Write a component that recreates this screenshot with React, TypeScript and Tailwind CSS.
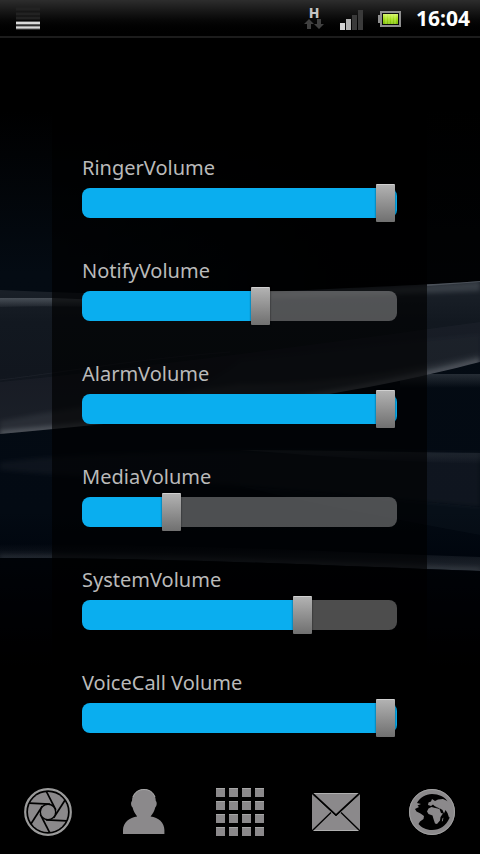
import { useState } from "react";

interface Channel {
  id: string;
  label: string;
  max: number;
  initial: number;
}

const channels: Channel[] = [
  { id: "ringer", label: "RingerVolume", max: 7, initial: 7 },
  { id: "notify", label: "NotifyVolume", max: 7, initial: 4 },
  { id: "alarm", label: "AlarmVolume", max: 7, initial: 7 },
  { id: "media", label: "MediaVolume", max: 15, initial: 4 },
  { id: "system", label: "SystemVolume", max: 7, initial: 5 },
  { id: "voice", label: "VoiceCall Volume", max: 5, initial: 5 },
];

function VolumeSlider({ channel }: { channel: Channel }) {
  const [value, setValue] = useState(channel.initial);

  return (
    <div className="flex flex-col gap-1.5">
      <label htmlFor={channel.id} className="text-[20px] leading-7 text-[#bababa]">
        {channel.label}
      </label>
      <input
        id={channel.id}
        type="range"
        min={0}
        max={channel.max}
        value={value}
        onChange={(e) => setValue(Number(e.target.value))}
        className="block h-[30px] w-full cursor-pointer appearance-none rounded-lg bg-white/30 bg-[linear-gradient(#0aaeef,#0aaeef)] bg-no-repeat px-0.5 outline-none [&::-webkit-slider-thumb]:h-[38px] [&::-webkit-slider-thumb]:w-[19px] [&::-webkit-slider-thumb]:appearance-none [&::-webkit-slider-thumb]:rounded-[1px] [&::-webkit-slider-thumb]:border-t [&::-webkit-slider-thumb]:border-[#d0d0d0] [&::-webkit-slider-thumb]:bg-linear-to-b [&::-webkit-slider-thumb]:from-[#b2b2b2] [&::-webkit-slider-thumb]:to-[#707070] [&::-webkit-slider-thumb]:shadow-[0_0_2px_rgba(0,0,0,0.7)]"
        style={{ backgroundSize: `${(value / channel.max) * 100}% 100%` }}
      />
    </div>
  );
}

function Wallpaper() {
  return (
    <svg
      className="absolute inset-0 h-full w-full"
      viewBox="0 0 480 854"
      preserveAspectRatio="none"
      aria-hidden="true"
    >
      <defs>
        <linearGradient id="sky" x1="0" y1="0" x2="0" y2="854" gradientUnits="userSpaceOnUse">
          <stop offset="0.13" stopColor="#000" />
          <stop offset="0.32" stopColor="#040b13" />
          <stop offset="0.6" stopColor="#030a13" />
          <stop offset="0.66" stopColor="#00050d" />
          <stop offset="0.78" stopColor="#000" />
        </linearGradient>
        <linearGradient id="shade" x1="0" y1="0" x2="480" y2="0" gradientUnits="userSpaceOnUse">
          <stop offset="0.1" stopColor="#000" stopOpacity="0" />
          <stop offset="0.7" stopColor="#000" stopOpacity="0.8" />
        </linearGradient>
        <linearGradient id="ribbon" x1="0" y1="284" x2="0" y2="434" gradientUnits="userSpaceOnUse">
          <stop offset="0" stopColor="#1b2129" />
          <stop offset="0.25" stopColor="#121820" />
          <stop offset="0.6" stopColor="#11161e" />
          <stop offset="1" stopColor="#171b22" />
        </linearGradient>
        <linearGradient id="crest" x1="0" y1="0" x2="0" y2="1">
          <stop offset="0" stopColor="#8b929a" stopOpacity="0.42" />
          <stop offset="1" stopColor="#8b929a" stopOpacity="0" />
        </linearGradient>
        <linearGradient id="trough" x1="0" y1="0" x2="0" y2="1">
          <stop offset="0" stopColor="#8b929a" stopOpacity="0" />
          <stop offset="1" stopColor="#8b929a" stopOpacity="0.25" />
        </linearGradient>
        <filter id="soft" x="-10%" y="-50%" width="120%" height="200%">
          <feGaussianBlur stdDeviation="2" />
        </filter>
        <clipPath id="ribbonClip">
          <path d="M0 290C90 294 180 297 270 292S430 285 480 281V362C380 388 250 412 0 434Z" />
        </clipPath>
        <clipPath id="baseClip">
          <path d="M0 434C250 412 380 388 480 362V571C330 566 190 558 0 558Z" />
        </clipPath>
      </defs>

      <rect width="480" height="854" fill="url(#sky)" />
      <rect y="60" width="480" height="235" fill="url(#shade)" />

      {/* main ribbon */}
      <path d="M0 290C90 294 180 297 270 292S430 285 480 281V362C380 388 250 412 0 434Z" fill="url(#ribbon)" />
      <g clipPath="url(#ribbonClip)">
        <path d="M0 298H52C130 301 200 304 270 300V308C180 312 90 304 0 307Z" fill="url(#crest)" />
        <path d="M270 292C350 289 430 285 480 281V291C420 294 340 296 270 298Z" fill="#8b929a" fillOpacity="0.25" filter="url(#soft)" />
        <path d="M427 285L480 281" stroke="#6b727a" strokeOpacity="0.5" strokeWidth="2" />
        <path d="M0 382C140 368 320 344 480 322V362C380 388 250 412 0 434Z" fill="#8b929a" fillOpacity="0.05" />
        <path d="M0 380C80 370 130 360 230 352" stroke="#8b929a" strokeOpacity="0.08" fill="none" />
        <path d="M240 360C330 350 400 342 480 334V362C380 388 250 412 140 422C190 392 230 370 240 360Z" fill="#8b929a" fillOpacity="0.04" filter="url(#soft)" />
        <path d="M0 421C60 410 110 402 240 384C330 384 400 372 480 354V362C380 388 250 412 0 434Z" fill="#8b929a" fillOpacity="0.12" filter="url(#soft)" />
        <path d="M0 434C250 412 380 388 480 362" stroke="#9aa0a8" strokeOpacity="0.34" strokeWidth="7" fill="none" filter="url(#soft)" />
      </g>

      {/* lower ribbons */}
      <g clipPath="url(#baseClip)">
        <path d="M400 374H480V388H400Z" fill="url(#crest)" fillOpacity="0.6" />
        <path d="M0 462C100 450 260 449 480 453V507C400 500 320 492 240 486S80 478 0 470Z" fill="#8b929a" fillOpacity="0.07" filter="url(#soft)" />
        <path d="M240 450C320 450 400 452 480 453V507C400 500 320 492 240 486Z" fill="#8b929a" fillOpacity="0.02" />
        <path d="M240 450C320 450 400 452 480 453V464C400 462 320 456 240 450Z" fill="url(#crest)" fillOpacity="0.4" />
        <path d="M240 486C320 492 400 500 480 507V535C400 520 320 506 240 486Z" fill="#8b929a" fillOpacity="0.04" />
        <path d="M0 544C190 544 330 552 480 557V571C330 566 190 558 0 558Z" fill="url(#trough)" />
        <path d="M0 557C190 557 330 565 480 570" stroke="#8b929a" strokeOpacity="0.14" strokeWidth="5" fill="none" filter="url(#soft)" />
      </g>
      <path d="M0 558C190 558 330 566 480 571V660H0Z" fill="#000" fillOpacity="0.4" />
    </svg>
  );
}

function StatusBar() {
  return (
    <header className="relative flex h-[38px] items-center justify-between border-b-2 border-[#1c1c1c] bg-linear-to-b from-[#2d2d2d] to-black pr-2.5 pl-4">
      <svg width="24" height="24" viewBox="0 0 24 24" aria-hidden="true">
        <path d="M0 3H24M0 8H24M0 12H24" stroke="#222" strokeWidth="3" />
        <path d="M0 17H24M0 21.5H24" stroke="#5a5a5a" strokeWidth="4" />
        <path d="M0 17H24M0 21.5H24" stroke="#dadada" strokeWidth="2" />
      </svg>
      <div className="flex items-center gap-3.5">
        <svg width="22" height="32" viewBox="0 -4 22 32" aria-hidden="true">
          <text x="10" y="12" textAnchor="middle" fontSize="14" fontWeight="800" fill="#c4c4c4">
            H
          </text>
          <path d="M5 13L10 18H7V23H3V18H0Z" fill="#404040" />
          <path d="M15 23L20 18H17V13H13V18H10Z" fill="#404040" />
        </svg>
        <svg width="24" height="24" viewBox="0 0 24 24" aria-hidden="true">
          <path d="M0 17H5V24H0Z" fill="#d2d2d2" />
          <path d="M6 13H11V24H6Z" fill="#b0b0b0" />
          <path d="M12 9H17V24H12ZM18 4H23V24H18Z" fill="#3a3a3a" />
        </svg>
        <svg width="24" height="24" viewBox="0 0 24 24" aria-hidden="true">
          <defs>
            <linearGradient id="charge" x1="0" y1="0" x2="0" y2="1">
              <stop offset="0" stopColor="#d6f56a" />
              <stop offset="0.5" stopColor="#a4dd1c" />
              <stop offset="1" stopColor="#7cbb0c" />
            </linearGradient>
          </defs>
          <path d="M0 9H3V17H0Z" fill="#8f8f8f" />
          <rect x="3" y="6" width="19" height="14" fill="#0b0b0b" stroke="#8f8f8f" strokeWidth="2" />
          <rect x="5" y="8" width="15" height="10" fill="url(#charge)" />
          <path d="M8 8V18M11 8V18M14 8V18M17 8V18" stroke="#e4ff8c" strokeOpacity="0.5" strokeWidth="1" />
        </svg>
        <time className="text-[21px] leading-7 font-bold text-white">16:04</time>
      </div>
    </header>
  );
}

function ApertureIcon() {
  return (
    <svg width="48" height="48" viewBox="0 0 48 48" aria-hidden="true">
      <circle cx="24" cy="24" r="22.8" fill="none" stroke="#9b9b9b" strokeWidth="2.2" />
      <circle cx="24" cy="24" r="20" fill="#8b898b" />
      {[0, 60, 120, 180, 240, 300].map((deg) => (
        <path key={deg} d="M22.2 3.2L31.8 21.9" stroke="#000" strokeWidth="1.7" transform={`rotate(${deg} 24 24)`} />
      ))}
      <circle cx="24" cy="24" r="7.7" fill="#8b898b" stroke="#000" strokeWidth="1.4" />
    </svg>
  );
}

function PersonIcon() {
  return (
    <svg width="48" height="48" viewBox="0 0 48 48" aria-hidden="true">
      <path
        d="M24 1C31 1 35.8 6 35.8 13C37.200 14 37 18 35.200 19.500C34.400 23 33 25.600 30.600 28.400C38.500 29.200 44.400 34.500 44.400 42V46H3V42C3 34.500 9.500 29.200 17.200 28.400C15 25.600 13.400 23 12.600 19.500C10.800 18 10.600 14 12 13C12 6 17 1 24 1Z"
        fill="#8b898b"
      />
      <path d="M13 9C15 4 19 1.500 24 1.500S33 4 35 9" stroke="#a8a8a8" fill="none" />
    </svg>
  );
}

function AppsIcon() {
  return (
    <svg width="48" height="48" viewBox="0 0 48 48" aria-hidden="true">
      {[0, 13, 26, 39].map((y) =>
        [0, 13, 26, 39].map((x) => (
          <g key={`${x}-${y}`}>
            <rect x={x} y={y} width="9" height="9" fill="#8b898b" />
            <rect x={x} y={y} width="9" height="1" fill="#a6a6a6" />
          </g>
        ))
      )}
    </svg>
  );
}

function MailIcon() {
  return (
    <svg width="48" height="48" viewBox="0 0 48 48" aria-hidden="true">
      <rect y="5" width="48" height="38" fill="#8b898b" />
      <path d="M1 5.500H47M1 42.500H47" stroke="#b0b0b0" />
      <path d="M0 6L24 28.500L48 6" stroke="#b4b4b4" strokeWidth="1" fill="none" />
      <path d="M0 43L19 24.500M48 43L29 24.500" stroke="#000" strokeWidth="1.300" />
      <path d="M0 5L24 27.200L48 5" stroke="#000" strokeWidth="1.800" fill="none" />
    </svg>
  );
}

function GlobeIcon() {
  return (
    <svg width="48" height="48" viewBox="0 0 48 48" aria-hidden="true">
      <circle cx="24" cy="24" r="23" fill="#8b898b" />
      <circle cx="24" cy="24" r="22.500" fill="none" stroke="#a2a2a2" />
      {/* ocean, bitten on the left by the Americas */}
      <path
        d="M24 6C31 6 36.500 8.800 39.600 13.500L41.500 18V30C38 38 32 42 24 42C18 42 13.500 39.500 10.500 36L12 33.500L15.500 31L16 28L12.500 25.500L8.500 23.500L7 21L11 19L9.500 17.500L13 16L9 15C12 9.500 17.500 6 24 6Z"
        fill="#000"
      />
      {/* Eurasia */}
      <path
        d="M20 17L20.500 14.500L23 13.500L24 11L27 13L30 11.500L35 11L40.500 13.500L43 18V28L41 29.500L39.500 25L37.500 22L36 25.500L34.500 22L32 20.500L30 21L27 18.500L25 16.500L23 18Z"
        fill="#8b898b"
      />
      {/* Africa */}
      <path
        d="M20.500 20.500L23.500 19L27.500 20L31.500 21L33 25L35 25.500L32.500 29L32 32.500L29 36L27 35.500L25.500 31L24.500 27.500L20.500 26L19 23.500Z"
        fill="#8b898b"
      />
      <path d="M34.500 30.500L35.500 29.500L34.800 33L33.800 33.500Z" fill="#8b898b" />
      <path d="M24 18.200L28 19.200L31 20.600" stroke="#000" strokeWidth="0.800" fill="none" />
    </svg>
  );
}

const dock = [
  { name: "Camera", Icon: ApertureIcon },
  { name: "Contacts", Icon: PersonIcon },
  { name: "Applications", Icon: AppsIcon },
  { name: "Mail", Icon: MailIcon },
  { name: "Browser", Icon: GlobeIcon },
];

export default function App() {
  return (
    <div className="relative flex min-h-screen flex-col bg-black font-['Noto_Sans','Open_Sans',sans-serif]">
      <Wallpaper />
      <StatusBar />

      <main className="relative mr-[53px] ml-[52px] flex flex-1 flex-col gap-[39px] bg-black/65 px-[30px] pt-[116px] pb-8">
        {channels.map((channel) => (
          <VolumeSlider key={channel.id} channel={channel} />
        ))}
      </main>

      <nav className="relative grid grid-cols-5 pt-4 pb-[18px]">
        {dock.map(({ name, Icon }) => (
          <button key={name} type="button" aria-label={name} className="flex cursor-pointer justify-center">
            <Icon />
          </button>
        ))}
      </nav>
    </div>
  );
}
